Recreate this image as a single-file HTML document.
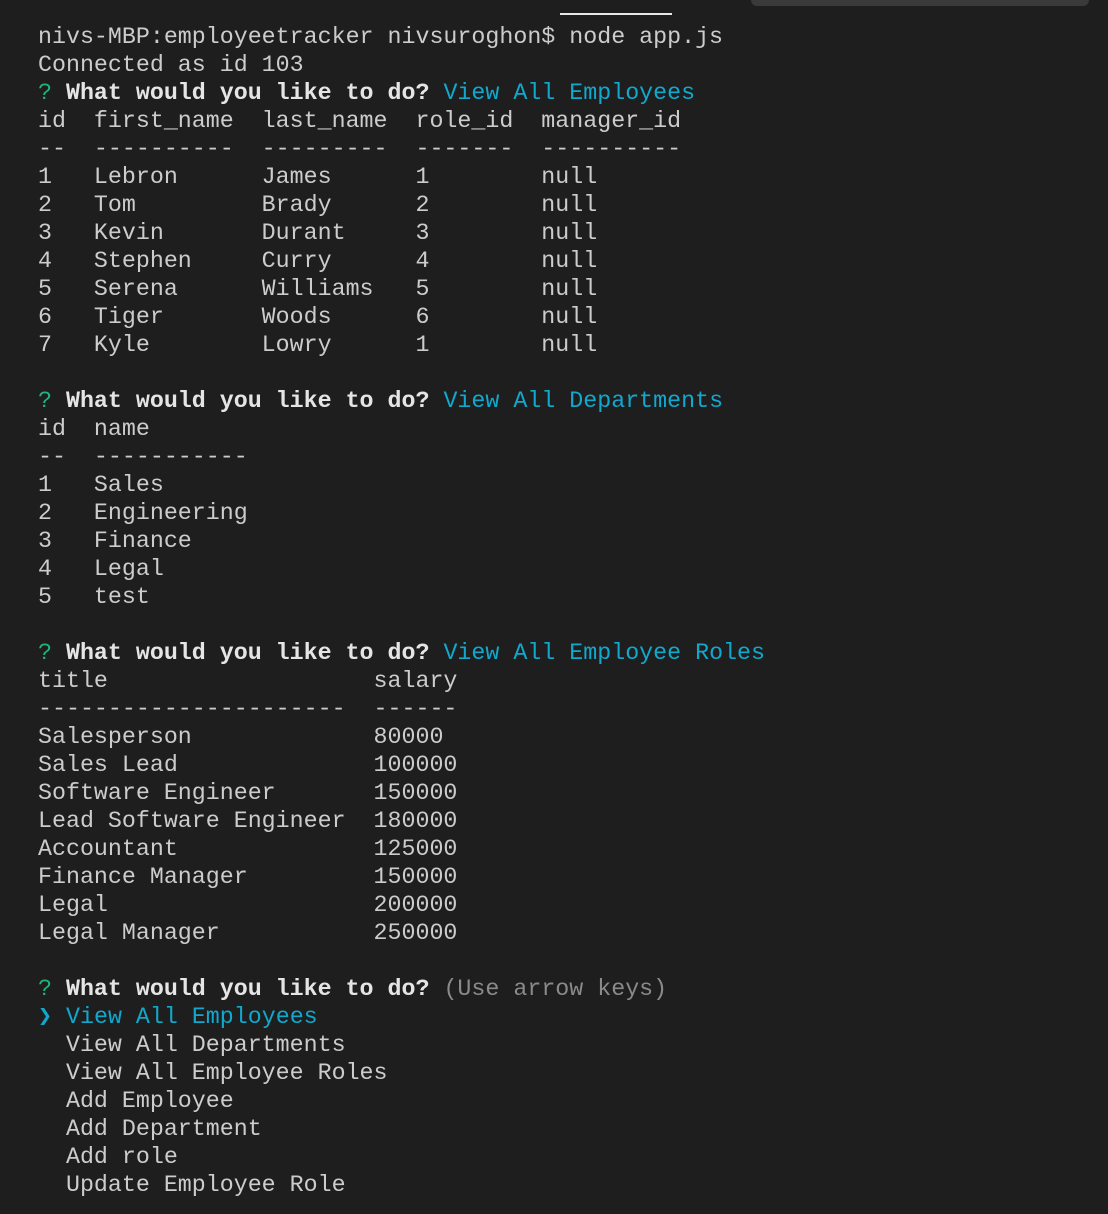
<!DOCTYPE html>
<html><head><style>
html,body{margin:0;padding:0;background:#1e1e1e;width:1108px;height:1214px;overflow:hidden}
pre{position:absolute;left:38px;top:23px;margin:0;font-family:"Liberation Mono",monospace;font-size:23.3px;line-height:28px;color:#cccccc}
.g{color:#23b27a}.c{color:#11a8cd}.b{font-weight:bold;color:#e5e5e5}.d{color:#8a8a8a}
#box{position:absolute;left:751px;top:-6px;width:338px;height:12px;background:#3a3a3a;border-radius:6px}
#ln{position:absolute;left:560px;top:13px;width:112px;height:2px;background:#e8e8e8}
</style></head><body>
<div id="box"></div><div id="ln"></div>
<pre>nivs-MBP:employeetracker nivsuroghon$ node app.js
Connected as id 103
<span class="g">?</span> <span class="b">What would you like to do?</span> <span class="c">View All Employees</span>
id  first_name  last_name  role_id  manager_id
--  ----------  ---------  -------  ----------
1   Lebron      James      1        null
2   Tom         Brady      2        null
3   Kevin       Durant     3        null
4   Stephen     Curry      4        null
5   Serena      Williams   5        null
6   Tiger       Woods      6        null
7   Kyle        Lowry      1        null

<span class="g">?</span> <span class="b">What would you like to do?</span> <span class="c">View All Departments</span>
id  name
--  -----------
1   Sales
2   Engineering
3   Finance
4   Legal
5   test

<span class="g">?</span> <span class="b">What would you like to do?</span> <span class="c">View All Employee Roles</span>
title                   salary
----------------------  ------
Salesperson             80000
Sales Lead              100000
Software Engineer       150000
Lead Software Engineer  180000
Accountant              125000
Finance Manager         150000
Legal                   200000
Legal Manager           250000

<span class="g">?</span> <span class="b">What would you like to do?</span> <span class="d">(Use arrow keys)</span>
<span class="c">❯ View All Employees</span>
  View All Departments
  View All Employee Roles
  Add Employee
  Add Department
  Add role
  Update Employee Role</pre>
</body></html>
